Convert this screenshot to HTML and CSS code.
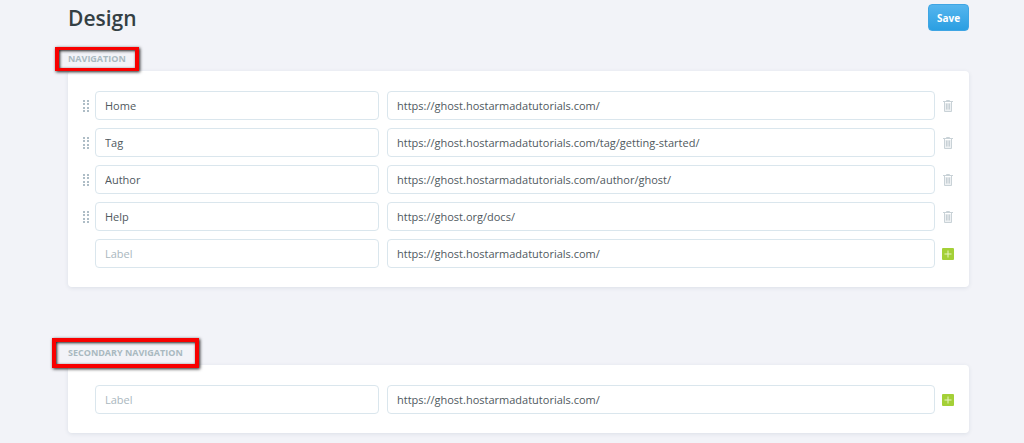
FILE: index.html
```html
<!DOCTYPE html>
<html lang="en">
    <head>
        <title>Design</title>
        <meta charset="UTF-8">
        <meta name="viewport" content="width=device-width, initial-scale=1.0">
        <link rel="stylesheet" href="styles.css">
    </head>
    <body>
        <!-- shared icons -->
        <svg class="sprite" width="0" height="0" aria-hidden="true">
            <symbol id="icon-grab" viewBox="0 0 8 14">
                <path d="M1 1h2v2h-2zM5 1h2v2h-2zM1 4h2v2h-2zM5 4h2v2h-2zM1 8h2v2h-2zM5 8h2v2h-2zM1 11h2v2h-2zM5 11h2v2h-2z" fill="#aebdc6"/>
            </symbol>
            <symbol id="icon-trash" viewBox="0 0 12 14">
                <path d="M3 4h6v8h-6z" fill="#eef1f3"/>
                <path d="M1 2.500h10M4.500 2V1.500h3V2M2.500 3v9.500h7V3M4.500 4.500v6M6 4.500v6M7.500 4.500v6" fill="none" stroke="#c3cdd2" stroke-width=".9"/>
            </symbol>
            <symbol id="icon-add" viewBox="0 0 12 12">
                <rect width="12" height="12" rx="1" fill="#a4d037"/>
                <path d="M6 2.500v7M2.500 6h7" fill="none" stroke="#e6f4c2" stroke-width="1"/>
            </symbol>
        </svg>

        <main class="container">
            <header class="header">
                <h1 class="title">Design</h1>
                <button type="button" class="btn-save">Save</button>
            </header>

            <section class="section">
                <h2 class="section-title"><span class="marked">Navigation</span></h2>
                <form class="card">
                    <div class="nav-item">
                        <svg class="grab"><use href="#icon-grab"/></svg>
                        <input type="text" aria-label="Label" value="Home">
                        <input type="text" aria-label="URL" value="https://ghost.hostarmadatutorials.com/">
                        <button type="button" class="btn-icon" aria-label="Delete"><svg class="trash"><use href="#icon-trash"/></svg></button>
                    </div>
                    <div class="nav-item">
                        <svg class="grab"><use href="#icon-grab"/></svg>
                        <input type="text" aria-label="Label" value="Tag">
                        <input type="text" aria-label="URL" value="https://ghost.hostarmadatutorials.com/tag/getting-started/">
                        <button type="button" class="btn-icon" aria-label="Delete"><svg class="trash"><use href="#icon-trash"/></svg></button>
                    </div>
                    <div class="nav-item">
                        <svg class="grab"><use href="#icon-grab"/></svg>
                        <input type="text" aria-label="Label" value="Author">
                        <input type="text" aria-label="URL" value="https://ghost.hostarmadatutorials.com/author/ghost/">
                        <button type="button" class="btn-icon" aria-label="Delete"><svg class="trash"><use href="#icon-trash"/></svg></button>
                    </div>
                    <div class="nav-item">
                        <svg class="grab"><use href="#icon-grab"/></svg>
                        <input type="text" aria-label="Label" value="Help">
                        <input type="text" aria-label="URL" value="https://ghost.org/docs/">
                        <button type="button" class="btn-icon" aria-label="Delete"><svg class="trash"><use href="#icon-trash"/></svg></button>
                    </div>
                    <div class="nav-item">
                        <span></span>
                        <input type="text" aria-label="Label" placeholder="Label">
                        <input type="text" aria-label="URL" value="https://ghost.hostarmadatutorials.com/">
                        <button type="button" class="btn-icon" aria-label="Add"><svg class="add"><use href="#icon-add"/></svg></button>
                    </div>
                </form>
            </section>

            <section class="section">
                <h2 class="section-title"><span class="marked marked-large">Secondary navigation</span></h2>
                <form class="card">
                    <div class="nav-item">
                        <span></span>
                        <input type="text" aria-label="Label" placeholder="Label">
                        <input type="text" aria-label="URL" value="https://ghost.hostarmadatutorials.com/">
                        <button type="button" class="btn-icon" aria-label="Add"><svg class="add"><use href="#icon-add"/></svg></button>
                    </div>
                </form>
            </section>
        </main>
    </body>
</html>
```

FILE: styles.css
```css
* {
    box-sizing: border-box;
}
body {
    margin: 0;
    background: #f2f3f8;
    color: #343f44;
    font-family: "Open Sans", "Noto Sans", sans-serif;
    font-size: 11px;
}
.sprite {
    position: absolute;
}
.container {
    padding: 4px 55px 9px 68px;
}

.header {
    display: flex;
    align-items: flex-start;
    justify-content: space-between;
    margin-bottom: 15px;
}
.title {
    margin: 0;
    font-size: 21px;
    font-weight: 600;
    line-height: 28px;
}
.btn-save {
    width: 41px;
    height: 27px;
    padding: 0;
    border: 1px solid #3fa5e4;
    border-radius: 4px;
    background: linear-gradient(#55b5ee, #2b9fe2);
    color: #fff;
    font-family: inherit;
    font-size: 10px;
    font-weight: 700;
}

.section {
    margin-bottom: 54px;
}
.section:last-child {
    margin-bottom: 0;
}
.section-title {
    margin: 0;
    padding: 4px 0;
    color: #a9b9c0;
    font-size: 9px;
    font-weight: 700;
    line-height: 16px;
    text-transform: uppercase;
}
/* red frame drawn round a heading */
.marked {
    position: relative;
    display: inline-block;
}
.marked::after {
    content: "";
    position: absolute;
    inset: -4px -13px;
    border: 4px solid #f80000;
    border-width: 3px 4px;
    box-shadow: 1px 1px 3px #222, inset 1px 1px 3px #222;
}
.marked-large::after {
    inset: -7px -16px;
    border-width: 4px;
}

.card {
    display: grid;
    gap: 8px;
    padding: 20px 0 19px;
    border-radius: 4px;
    background: #fff;
    box-shadow: 0 1px 4px rgba(30, 60, 90, .1);
}
.nav-item {
    display: grid;
    grid-template-columns: 19px 284fr 548fr 26px;
    column-gap: 8px;
    align-items: center;
}
.nav-item input {
    width: 100%;
    min-width: 0;
    height: 29px;
    padding: 0 9px;
    border: 1px solid #dae6ed;
    border-radius: 4px;
    background: #fff;
    color: #50595e;
    font-family: inherit;
    font-size: 11px;
}
.nav-item input::placeholder {
    color: #aab7be;
}
.grab {
    justify-self: end;
    width: 8px;
    height: 14px;
    margin-right: -3px;
}
.btn-icon {
    display: flex;
    width: 12px;
    margin-left: -1px;
    padding: 0;
    border: 0;
    background: none;
}
.trash {
    width: 12px;
    height: 14px;
}
.add {
    width: 12px;
    height: 12px;
}
```
